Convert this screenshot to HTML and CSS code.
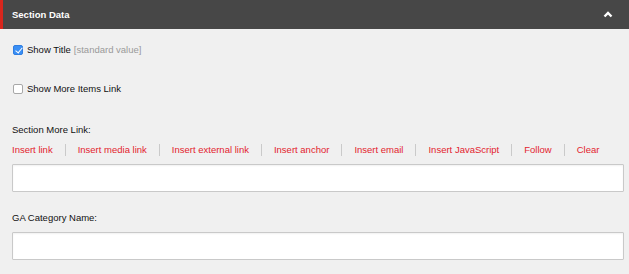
FILE: index.html
```html
<!DOCTYPE html>
<html lang="en">
    <head>
        <meta charset="UTF-8" />
        <title>Section Data</title>
        <link rel="stylesheet" href="styles.css">
    </head>
    <body>
        <div class="section-header">
            <span>Section Data</span>
            <svg class="chevron" width="10" height="7" viewBox="0 0 10 7">
                <polyline points="1.5,5.5 5,2 8.5,5.5" fill="none" stroke="#fff" stroke-width="2.4" />
            </svg>
        </div>
        <div class="section-body">
            <label class="check-row first">
                <input type="checkbox" checked>
                <span>Show Title</span>
                <span class="std-value">[standard value]</span>
            </label>
            <label class="check-row second">
                <input type="checkbox">
                <span>Show More Items Link</span>
            </label>

            <div class="field-label link-label">Section More Link:</div>
            <div class="link-tools">
                <a href="#">Insert link</a>
                <a href="#">Insert media link</a>
                <a href="#">Insert external link</a>
                <a href="#">Insert anchor</a>
                <a href="#">Insert email</a>
                <a href="#">Insert JavaScript</a>
                <a href="#">Follow</a>
                <a href="#">Clear</a>
            </div>
            <input class="text-field" type="text">

            <div class="field-label ga-label">GA Category Name:</div>
            <input class="text-field" type="text">
        </div>
    </body>
</html>
```

FILE: styles.css
```css
body {
    margin: 0;
    background-color: #f0f0f0;
    font-family: "Liberation Sans", Arial, sans-serif;
    font-size: 9.5px;
    color: #111;
}
.section-header {
    display: flex;
    align-items: center;
    justify-content: space-between;
    height: 29px;
    background-color: #474747;
    border-left: 3px solid #d8261d;
    padding: 0 16px 0 9px;
    color: #fff;
    font-weight: bold;
}
.chevron {
    display: block;
    margin-top: -1px;
}
.section-body {
    padding: 0 5px 0 12px;
}
.check-row {
    display: flex;
    align-items: center;
    height: 12px;
    line-height: 12px;
}
.check-row.first {
    margin-top: 15px;
}
.check-row.second {
    margin-top: 27px;
}
.check-row input {
    appearance: none;
    -webkit-appearance: none;
    position: relative;
    width: 10px;
    height: 10px;
    margin: 0 4px 0 1px;
    border: 1px solid #a8a8a8;
    border-radius: 2px;
    background-color: #fff;
}
.check-row input:checked {
    background-color: #3a8ff5;
    border-color: #2f7de0;
}
.check-row input:checked::after {
    content: "";
    position: absolute;
    left: 2.5px;
    top: 0px;
    width: 3px;
    height: 6px;
    border: solid #fff;
    border-width: 0 1.6px 1.6px 0;
    transform: rotate(40deg);
}
.std-value {
    color: #9a9a9a;
    margin-left: 3px;
}
.field-label {
    height: 12px;
    line-height: 12px;
}
.link-label {
    margin-top: 29px;
}
.ga-label {
    margin: 20px 0 8px;
}
.link-tools {
    display: flex;
    align-items: center;
    height: 12px;
    line-height: 12px;
    margin: 8px 0;
}
.link-tools a {
    color: #e3232e;
    text-decoration: none;
    padding: 0 12px;
    border-left: 1px solid #cacaca;
}
.link-tools a:first-child {
    padding-left: 0;
    border-left: none;
}
.text-field {
    display: block;
    box-sizing: border-box;
    width: 100%;
    height: 28px;
    margin: 0;
    border: 1px solid #c9c9c9;
    border-radius: 1px;
    background-color: #fff;
    box-shadow: inset 0 1px 2px rgba(0, 0, 0, 0.06);
}
```
